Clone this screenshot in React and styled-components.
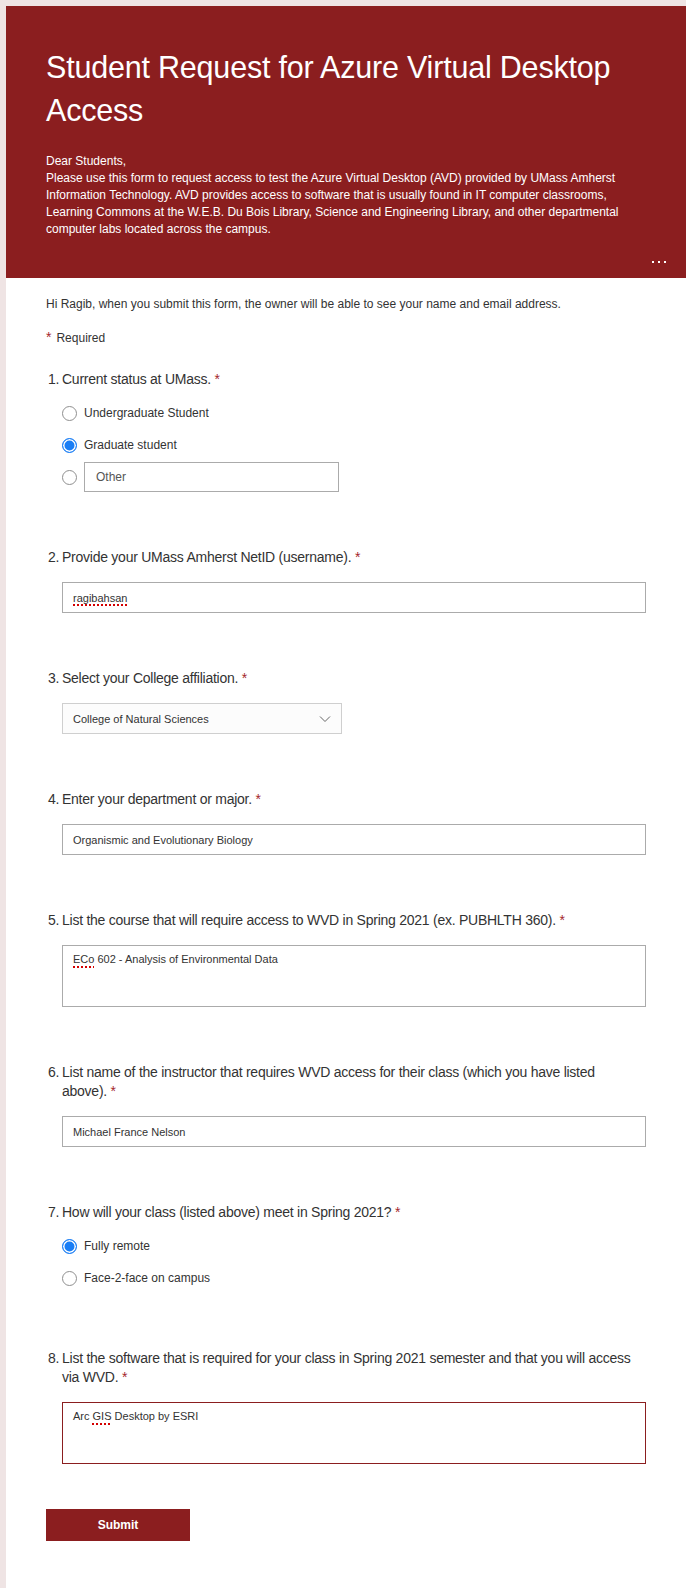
import React from 'react';
import styled, { createGlobalStyle } from 'styled-components';

const GlobalStyle = createGlobalStyle`
  html, body {
    margin: 0;
    padding: 0;
    background: #efe4e4;
    font-family: "Liberation Sans", Arial, sans-serif;
  }
`

const Page = styled.div`
  min-height: 100vh;
  box-sizing: border-box;
  padding: 6px 0 0 6px;
`

const Card = styled.div`
  background: #fff;
  min-height: calc(100vh - 6px);
`

const Header = styled.header`
  position: relative;
  background: #8b1e1f;
  color: #fff;
  padding: 40px 40px 40px 40px;
`

const Title = styled.h1`
  margin: 0;
  font-size: 30.5px;
  font-weight: normal;
  line-height: 43px;
  letter-spacing: -0.2px;
`

const Description = styled.div`
  margin-top: 21px;
  font-size: 12px;
  line-height: 17px;
`

const MoreButton = styled.div`
  position: absolute;
  right: 20px;
  bottom: 15px;
  display: flex;
  gap: 4px;
`

const Dot = styled.span`
  width: 2px;
  height: 2px;
  background: #fff;
`

const Body = styled.div`
  padding: 19px 40px 52px;
  color: #333;
`

const Intro = styled.div`
  font-size: 12px;
  line-height: 14px;
`

const RequiredNote = styled.div`
  margin-top: 19px;
  font-size: 12px;
  line-height: 14px;
`

const Star = styled.span`
  color: #a4262c;
  font-size: 14px;
  margin-right: ${p => p.$inline ? '0' : '5px'};
`

const QuestionList = styled.div`
  margin-top: 25px;
  display: flex;
  flex-direction: column;
  gap: 56px;
`

const QuestionTitle = styled.div`
  display: flex;
  padding-left: 2px;
  font-size: 14px;
  line-height: 19px;
  letter-spacing: -0.25px;
  color: #333;
`

const Num = styled.span`
  flex: 0 0 14px;
`

const Field = styled.div`
  margin: 15px 0 0 16px;
  box-sizing: border-box;
  height: ${p => p.$tall ? '62px' : '31px'};
  width: ${p => p.$w || 'auto'};
  border: 1px solid ${p => p.$focus ? '#8b1e1f' : p.$light ? '#cfcfcf' : '#ababab'};
  background: ${p => p.$light ? '#fcfcfc' : '#fff'};
  padding: ${p => p.$tall ? '6px 10px' : '0 10px'};
  display: flex;
  align-items: ${p => p.$tall ? 'flex-start' : 'center'};
  justify-content: space-between;
  font-size: 11px;
  line-height: 14px;
  color: #333;
`

const Typo = styled.span`
  text-decoration: underline dotted #d40000;
  text-underline-offset: 3px;
  text-decoration-thickness: 1.5px;
`

const Options = styled.div`
  margin: 9px 0 0 16px;
  display: flex;
  flex-direction: column;
  gap: 2px;
`

const OptionRow = styled.label`
  display: flex;
  align-items: center;
  min-height: 30px;
  gap: 7px;
  font-size: 12px;
  color: #333;
`

const Radio = styled.span`
  flex: 0 0 auto;
  width: 15px;
  height: 15px;
  box-sizing: border-box;
  border-radius: 50%;
  border: 1px solid ${p => p.$on ? '#1a7ef5' : '#8f8f8f'};
  background: ${p => p.$on ? '#1a7ef5' : '#fff'};
  box-shadow: ${p => p.$on ? 'inset 0 0 0 1.5px #fff' : 'none'};
`

const OtherBox = styled.div`
  width: 255px;
  height: 30px;
  box-sizing: border-box;
  border: 1px solid #ababab;
  padding-left: 11px;
  display: flex;
  align-items: center;
  font-size: 12px;
  color: #555;
`

const SubmitButton = styled.button`
  margin-top: 45px;
  width: 144px;
  height: 32px;
  border: none;
  background: #8b1e1f;
  color: #fff;
  font-family: inherit;
  font-size: 12px;
  font-weight: bold;
`

const Chevron = () => (
  <svg width="12" height="8" viewBox="0 0 12 8">
    <path d="M1 1.5 L6 6.5 L11 1.5" fill="none" stroke="#666" strokeWidth="1" />
  </svg>
)

const Question = ({ n, children, title }) => (
  <div>
    <QuestionTitle>
      <Num>{n}.</Num>
      <span>{title}{'\u00a0'}<Star $inline>*</Star></span>
    </QuestionTitle>
    {children}
  </div>
)

const App = () => {
  return (
    <Page>
      <GlobalStyle />
      <Card>
        <Header>
          <Title>Student Request for Azure Virtual Desktop Access</Title>
          <Description>
            Dear Students,<br />
            Please use this form to request access to test the Azure Virtual Desktop (AVD) provided by UMass Amherst Information Technology. AVD provides access to software that is usually found in IT computer classrooms, Learning Commons at the W.E.B. Du Bois Library, Science and Engineering Library, and other departmental computer labs located across the campus.
          </Description>
          <MoreButton><Dot /><Dot /><Dot /></MoreButton>
        </Header>
        <Body>
          <Intro>Hi Ragib, when you submit this form, the owner will be able to see your name and email address.</Intro>
          <RequiredNote><Star>*</Star>Required</RequiredNote>
          <QuestionList>
            <Question n={1} title="Current status at UMass.">
              <Options>
                <OptionRow><Radio />Undergraduate Student</OptionRow>
                <OptionRow><Radio $on />Graduate student</OptionRow>
                <OptionRow><Radio /><OtherBox>Other</OtherBox></OptionRow>
              </Options>
            </Question>
            <Question n={2} title="Provide your UMass Amherst NetID (username).">
              <Field><Typo>ragibahsan</Typo></Field>
            </Question>
            <Question n={3} title="Select your College affiliation.">
              <Field $light $w="280px">College of Natural Sciences<Chevron /></Field>
            </Question>
            <Question n={4} title="Enter your department or major.">
              <Field>Organismic and Evolutionary Biology</Field>
            </Question>
            <Question n={5} title="List the course that will require access to WVD in Spring 2021 (ex. PUBHLTH 360).">
              <Field $tall><span><Typo>ECo</Typo> 602 - Analysis of Environmental Data</span></Field>
            </Question>
            <Question n={6} title="List name of the instructor that requires WVD access for their class (which you have listed above).">
              <Field>Michael France Nelson</Field>
            </Question>
            <Question n={7} title="How will your class (listed above) meet in Spring 2021?">
              <Options>
                <OptionRow><Radio $on />Fully remote</OptionRow>
                <OptionRow><Radio />Face-2-face on campus</OptionRow>
              </Options>
            </Question>
            <Question n={8} title="List the software that is required for your class in Spring 2021 semester and that you will access via WVD.">
              <Field $tall $focus><span>Arc <Typo>GIS</Typo> Desktop by ESRI</span></Field>
            </Question>
          </QuestionList>
          <SubmitButton>Submit</SubmitButton>
        </Body>
      </Card>
    </Page>
  )
}

export default App
